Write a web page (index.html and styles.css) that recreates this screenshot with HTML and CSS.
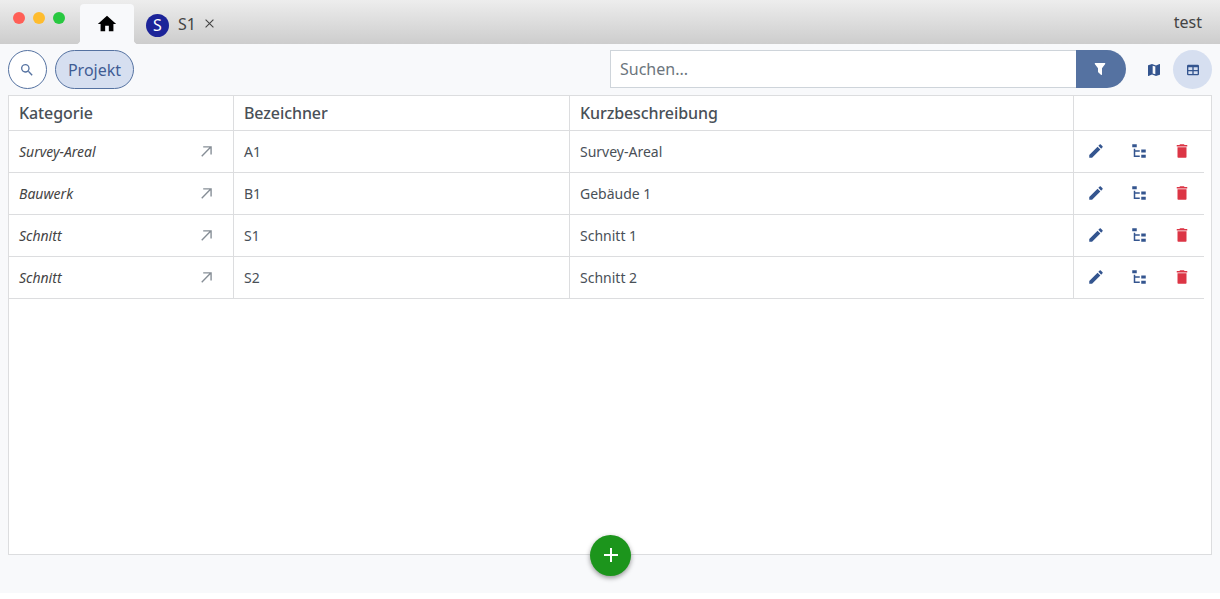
FILE: index.html
```
<!DOCTYPE html>
<html lang="de">
<head>
<meta charset="utf-8">
<title>test</title>
<link rel="stylesheet" href="styles.css">
</head>
<body>
<svg class="defs" width="0" height="0" aria-hidden="true">
  <symbol id="arrow" viewBox="0 0 12 12"><path d="M.8 11.2 10.4 1.4M2.4 1h8.6v8.4" fill="none" stroke="currentColor" stroke-width="1.5"/></symbol>
  <symbol id="pencil" viewBox="0 0 24 24"><path d="M20.71 7.04c.39-.39.39-1.04 0-1.41l-2.34-2.34c-.37-.39-1.02-.39-1.41 0l-1.84 1.83 3.75 3.75M3 17.25V21h3.75L17.81 9.93l-3.75-3.75z"/></symbol>
  <symbol id="tree" viewBox="0 0 24 24"><path d="M3 3h6v4H3zm12 7h6v4h-6zm0 7h6v4h-6zm-2-4H7v5h6v2H5V9h2v2h6z"/></symbol>
  <symbol id="trash" viewBox="0 0 24 24"><path d="M19 4h-3.5l-1-1h-5l-1 1H5v2h14M6 20a1 1 0 0 0 1 1h10a1 1 0 0 0 1-1V7H6z"/></symbol>
</svg>
<div class="app">
  <header class="titlebar">
    <div class="lights"><i class="light red"></i><i class="light yellow"></i><i class="light green"></i></div>
    <div class="tab-home"><svg width="22" height="22" viewBox="0 0 24 24"><path d="M10 20v-6h4v6h5v-8h3L12 3 2 12h3v8z"/></svg></div>
    <div class="tab"><span class="badge">S</span><span class="tab-name">S1</span><svg class="close" width="9" height="9" viewBox="0 0 9 9"><path d="M.6.6l7.8 7.8M8.4.6L.6 8.4"/></svg></div>
    <div class="project">test</div>
  </header>
  <nav class="toolbar">
    <button class="round"><svg width="16" height="16" viewBox="0 0 24 24"><path d="M9.5 3A6.5 6.5 0 0 1 16 9.5c0 1.61-.59 3.09-1.56 4.23l.27.27h.79l5 5-1.5 1.5-5-5v-.79l-.27-.27A6.5 6.5 0 1 1 9.5 3m0 2a4.5 4.5 0 1 0 0 9 4.5 4.5 0 0 0 0-9z"/></svg></button>
    <button class="pill">Projekt</button>
    <div class="search"><input class="search-input" type="text" placeholder="Suchen..."><button class="filter"><svg width="16" height="16" viewBox="0 0 24 24"><path d="M15 19.88c.04.3-.06.62-.29.83a1 1 0 0 1-1.41 0l-4.01-4.01a.99.99 0 0 1-.29-.83v-5.12L4.21 4.62a1 1 0 0 1 .17-1.4c.19-.14.4-.22.62-.22h14c.22 0 .43.08.62.22a1 1 0 0 1 .17 1.4L15 10.75z"/></svg></button></div>
    <button class="view"><svg width="16" height="16" viewBox="0 0 24 24"><path d="M20.5 3l-.16.03L15 5.1 9 3 3.36 4.9c-.21.07-.36.25-.36.48V20.5a.5.5 0 0 0 .5.5l.16-.03L9 18.9l6 2.1 5.64-1.9c.21-.07.36-.25.36-.48V3.5a.5.5 0 0 0-.5-.5zM10 5.47l4 1.4v11.66l-4-1.4z"/></svg></button>
    <button class="view active"><svg width="16" height="16" viewBox="0 0 24 24"><path d="M5 4h14a2 2 0 0 1 2 2v12a2 2 0 0 1-2 2H5a2 2 0 0 1-2-2V6a2 2 0 0 1 2-2m0 4v4h6V8H5m8 0v4h6V8h-6m-8 6v4h6v-4H5m8 0v4h6v-4z"/></svg></button>
  </nav>
  <main class="list">
    <div class="row head"><div>Kategorie</div><div>Bezeichner</div><div>Kurzbeschreibung</div><div></div></div>
    <div class="row"><div class="cat"><em>Survey-Areal</em><svg class="arrow"><use href="#arrow"/></svg></div><div>A1</div><div>Survey-Areal</div><div class="actions"><svg><use href="#pencil"/></svg><svg><use href="#tree"/></svg><svg class="delete"><use href="#trash"/></svg></div></div>
    <div class="row"><div class="cat"><em>Bauwerk</em><svg class="arrow"><use href="#arrow"/></svg></div><div>B1</div><div>Gebäude 1</div><div class="actions"><svg><use href="#pencil"/></svg><svg><use href="#tree"/></svg><svg class="delete"><use href="#trash"/></svg></div></div>
    <div class="row"><div class="cat"><em>Schnitt</em><svg class="arrow"><use href="#arrow"/></svg></div><div>S1</div><div>Schnitt 1</div><div class="actions"><svg><use href="#pencil"/></svg><svg><use href="#tree"/></svg><svg class="delete"><use href="#trash"/></svg></div></div>
    <div class="row"><div class="cat"><em>Schnitt</em><svg class="arrow"><use href="#arrow"/></svg></div><div>S2</div><div>Schnitt 2</div><div class="actions"><svg><use href="#pencil"/></svg><svg><use href="#tree"/></svg><svg class="delete"><use href="#trash"/></svg></div></div>
    <button class="add"><svg width="24" height="24" viewBox="0 0 24 24"><path d="M19 13h-6v6h-2v-6H5v-2h6V5h2v6h6z"/></svg></button>
  </main>
</div>
</body>
</html>
```
FILE: styles.css
```
* { box-sizing: border-box; }
body { margin: 0; background: #fff; color: #495057; font: 16px/24px "Noto Sans", sans-serif; }
button { padding: 0; font: inherit; border: 0; cursor: pointer; display: flex; align-items: center; justify-content: center; }
svg { display: block; fill: currentColor; flex: none; }
.defs { position: absolute; }
.app { height: 593px; background: #f8f9fb; }

.titlebar { height: 44px; display: flex; background: linear-gradient(#ededed, #cdcdcd); color: #444; }
.lights { width: 80px; padding: 12px 0 0 13px; display: flex; gap: 8px; }
.light { width: 12px; height: 12px; border-radius: 50%; }
.red { background: #ff5f57; }
.yellow { background: #febc2e; }
.green { background: #28c840; }
.tab-home { position: relative; width: 54px; height: 40px; margin-top: 4px; border-radius: 4px 4px 0 0; background: #f8f9fb; color: #000; display: flex; align-items: center; justify-content: center; }
.tab-home::before, .tab-home::after { content: ""; position: absolute; bottom: 0; width: 3px; height: 3px; }
.tab-home::before { left: -3px; background: radial-gradient(circle at 0 0, transparent 2.5px, #f8f9fb 3px); }
.tab-home::after { right: -3px; background: radial-gradient(circle at 100% 0, transparent 2.5px, #f8f9fb 3px); }
.tab { display: flex; align-items: center; padding: 4px 0 0 12px; }
.badge { width: 23px; height: 23px; margin-top: 2px; border-radius: 50%; background: #1c2499; color: #fff; line-height: 23px; text-align: center; }
.tab-name { margin-left: 9px; }
.close { margin: 0 0 1px 9px; stroke: #444; stroke-width: 1.1; }
.project { margin-left: auto; padding: 10px 18px 0 0; }

.toolbar { height: 51px; padding: 6px 8px; display: flex; }
.round { width: 39px; height: 39px; padding-right: 1px; border: 1px solid #5572a1; border-radius: 50%; background: #fff; color: #5572a1; }
.pill { width: 79px; height: 39px; margin-left: 8px; border: 1px solid #5572a1; border-radius: 20px; background: #d6dff0; color: #3f5c94; }
.search { display: flex; width: 516px; height: 38px; margin-left: auto; }
.search-input { flex: 1; min-width: 0; padding: 0 9px; border: 1px solid #ced4da; border-right: 0; background: #fff; color: #495057; font: inherit; outline: none; }
.search-input::placeholder { color: #6c757d; opacity: 1; }
.filter { width: 50px; padding-right: 2px; border-radius: 0 19px 19px 0; background: #5572a1; color: #fff; }
.view { width: 39px; height: 39px; border-radius: 50%; background: none; color: #34558f; margin-left: 8px; }
.view + .view { margin-left: 0; }
.view.active { background: #d6dff0; }

.list { position: relative; margin: 0 8px; height: 460px; border: 1px solid #dcdddf; background: #fff; }
.row { display: grid; grid-template-columns: 225px 336px 504px 1fr; height: 42px; margin-right: 7px; border-bottom: 1px solid #dcdddf; font-size: 14px; }
.row > div { display: flex; align-items: center; padding: 0 10px; border-right: 1px solid #dcdddf; }
.row > div:last-child { border-right: 0; }
.head { height: 35px; margin-right: 0; font-size: 16px; font-weight: 500; letter-spacing: -.09px; }
.cat { justify-content: space-between; color: #444; }
.row > .cat { padding-right: 21px; }
.arrow { width: 11px; height: 11px; margin-bottom: 1px; color: #868e96; }
.row > .actions { padding: 0 13px 1px; gap: 25px; color: #34558f; }
.actions svg { width: 18px; height: 18px; }
.actions .delete { color: #dc3545; }
.add { position: absolute; left: 581px; top: 439px; width: 41px; height: 41px; padding-bottom: 1px; border-radius: 50%; background: #1c951c; color: #fff; box-shadow: 0 2px 5px rgba(0, 0, 0, .4); }
```
